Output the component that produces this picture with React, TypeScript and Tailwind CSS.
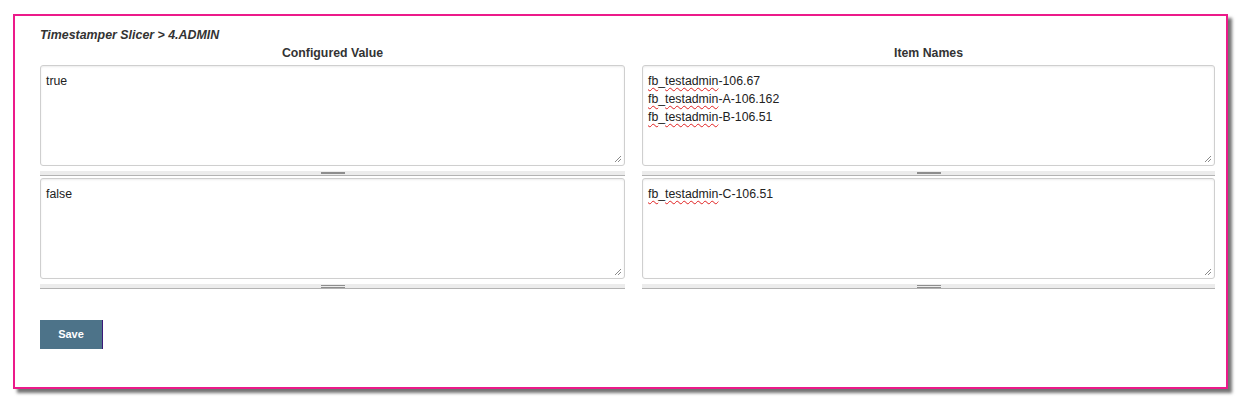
import React from 'react';

const Misspelled: React.FC<{ children: React.ReactNode }> = ({ children }) => (
  <span className="underline decoration-wavy decoration-[#e02020] decoration-1 underline-offset-2">{children}</span>
);

const ItemName: React.FC<{ suffix: string }> = ({ suffix }) => (
  <div>
    <Misspelled>fb</Misspelled>_<Misspelled>testadmin</Misspelled>
    {suffix}
  </div>
);

const Grip = () => (
  <svg width="9" height="9" viewBox="0 0 9 9" className="absolute right-[2px] bottom-[2px]">
    <line x1="8" y1="2" x2="2" y2="8" stroke="#8a8a8a" strokeWidth="1" />
    <line x1="8" y1="5" x2="5" y2="8" stroke="#8a8a8a" strokeWidth="1" />
  </svg>
);

const Box: React.FC<{ children: React.ReactNode; double?: boolean }> = ({ children, double }) => (
  <div>
    <div className="relative h-[101px] rounded-[3px] border border-[#cfcfcf] bg-white px-[5px] py-[6px] text-[12.3px] leading-[18px] text-[#222] shadow-[inset_0_1px_2px_rgba(0,0,0,0.08)]">
      {children}
      <Grip />
    </div>
    <div className="mt-[5px] flex h-[5px] items-center justify-center border-b border-[#b3b3b3] bg-[#ececec]">
      {double ? (
        <div className="flex flex-col gap-[1px]">
          <div className="h-px w-[24px] bg-[#8e8e8e]" />
          <div className="h-px w-[24px] bg-[#8e8e8e]" />
        </div>
      ) : (
        <div className="h-[2px] w-[24px] bg-[#8e8e8e]" />
      )}
    </div>
  </div>
);

export default function App() {
  return (
    <div className="h-[402px] w-[1241px] bg-white pl-[13px] pt-[14px] font-['Liberation_Sans',Arial,sans-serif]">
      <div className="h-[375px] w-[1215px] border-2 border-[#ec1a8a] bg-white pl-[25px] shadow-[4px_4px_3px_rgba(0,0,0,0.55)]">
        <div className="pt-[11px] text-[12.4px] font-bold italic leading-[16px] text-[#333]">
          Timestamper Slicer &gt; 4.ADMIN
        </div>
        <div className="mt-[3px] flex gap-[17px]">
          <div className="flex w-[585px] flex-col">
            <div className="mb-[5px] text-center text-[12.3px] font-bold leading-[14px] text-[#333]">Configured Value</div>
            <div className="flex flex-col gap-[2px]">
              <Box>true</Box>
              <Box double>false</Box>
            </div>
          </div>
          <div className="flex w-[573px] flex-col">
            <div className="mb-[5px] text-center text-[12.3px] font-bold leading-[14px] text-[#333]">Item Names</div>
            <div className="flex flex-col gap-[2px]">
              <Box>
                <ItemName suffix="-106.67" />
                <ItemName suffix="-A-106.162" />
                <ItemName suffix="-B-106.51" />
              </Box>
              <Box double>
                <ItemName suffix="-C-106.51" />
              </Box>
            </div>
          </div>
        </div>
        <button className="mt-[31px] h-[29px] w-[63px] border-r border-[#3b1a7a] bg-[#4d7389] text-[11px] font-semibold text-white">
          Save
        </button>
      </div>
    </div>
  );
}
